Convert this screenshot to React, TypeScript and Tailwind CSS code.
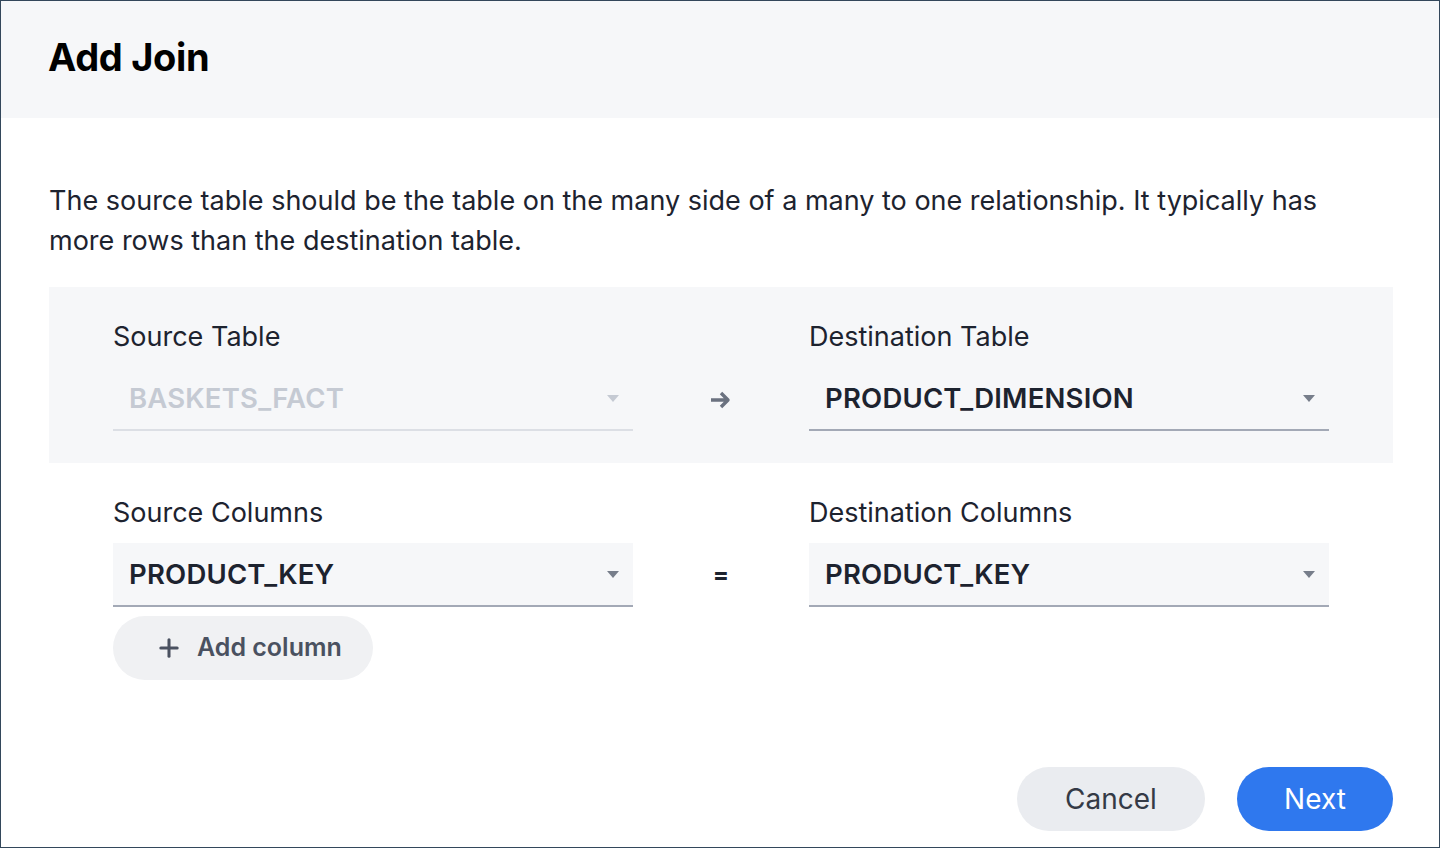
import { Plus } from "lucide-react";

const font = { fontFamily: "Inter, 'Noto Sans', sans-serif" };

function Caret({ className }: { className: string }) {
  return (
    <svg width="12" height="7" viewBox="0 0 12 7" className={className}>
      <path d="M0 0h12L6 7z" fill="currentColor" />
    </svg>
  );
}

function Select({
  value,
  disabled,
  filled,
}: {
  value: string;
  disabled?: boolean;
  filled?: boolean;
}) {
  return (
    <div
      className={`flex h-[64px] items-center justify-between border-b-2 pl-4 pr-[14px] ${
        filled ? "bg-[#f6f7f9]" : ""
      } ${disabled ? "border-[#dcdfe5]" : "border-[#a3a9b6]"}`}
    >
      <span
        className={`pt-[2px] text-[27.5px] font-semibold tracking-[0.2px] ${
          disabled ? "text-[#c5cad3]" : "text-[#1d232f]"
        }`}
      >
        {value}
      </span>
      <Caret className={disabled ? "text-[#c5cad3]" : "text-[#777e8b]"} />
    </div>
  );
}

export default function App() {
  return (
    <div
      style={font}
      className="flex h-[848px] w-[1440px] flex-col border border-[#33475b] bg-white text-[#1d232f]"
    >
      <div className="flex h-[117px] items-center bg-[#f6f7f9] pl-[47px]">
        <h1 className="pb-1 text-[38px] font-bold tracking-[-0.3px] text-black">Add Join</h1>
      </div>

      <div className="flex flex-1 flex-col pl-[48px] pr-[46px]">
        <p className="mt-[63px] max-w-[1300px] text-[27px] leading-[40px] text-[#1d232f]">
          The source table should be the table on the many side of a many to one relationship. It typically has more rows
          than the destination table.
        </p>

        <div className="mt-[26px] grid grid-cols-[520px_176px_520px] bg-[#f6f7f9] pb-[32px] pl-[64px] pt-[34px]">
          <div className="text-[27px] leading-[32px]">Source Table</div>
          <div />
          <div className="text-[27px] leading-[32px]">Destination Table</div>
          <div className="mt-[14px]">
            <Select value="BASKETS_FACT" disabled />
          </div>
          <div className="mt-[14px] flex items-center justify-center pt-[2px] text-[#6b7280]">
            <svg width="22" height="18" viewBox="0 0 22 18">
              <path
                d="M1 9h17M11 2l7 7-7 7"
                fill="none"
                stroke="currentColor"
                strokeWidth="3.4"
                strokeLinejoin="round"
              />
            </svg>
          </div>
          <div className="mt-[14px]">
            <Select value="PRODUCT_DIMENSION" />
          </div>
        </div>

        <div className="grid grid-cols-[520px_176px_520px] pl-[64px] pt-[34px]">
          <div className="text-[27px] leading-[32px]">Source Columns</div>
          <div />
          <div className="text-[27px] leading-[32px]">Destination Columns</div>
          <div className="mt-[14px]">
            <Select value="PRODUCT_KEY" filled />
          </div>
          <div className="mt-[14px] flex items-center justify-center text-[24px] font-bold text-[#1d232f]">=</div>
          <div className="mt-[14px]">
            <Select value="PRODUCT_KEY" filled />
          </div>
          <div className="mt-[9px]">
            <button className="flex h-[64px] w-[260px] items-center gap-[14px] rounded-full bg-[#f0f1f3] pl-[42px] text-[25px] font-semibold text-[#4a5160]">
              <Plus size={28} strokeWidth={2.6} />
              Add column
            </button>
          </div>
        </div>

        <div className="mt-auto mb-[16px] flex justify-end gap-8">
          <button className="h-[64px] w-[188px] rounded-full bg-[#eaecf0] text-[28px] text-[#343a46]">Cancel</button>
          <button className="h-[64px] w-[156px] rounded-full bg-[#2f78ee] text-[28px] text-white">Next</button>
        </div>
      </div>
    </div>
  );
}
